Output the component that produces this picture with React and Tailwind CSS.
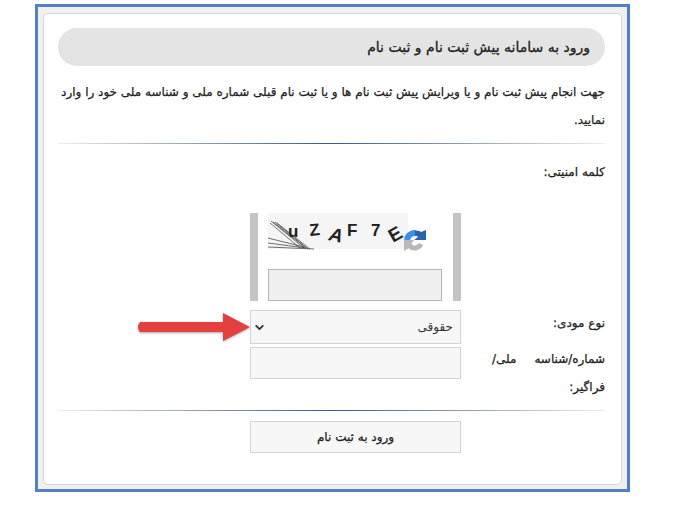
import { ChevronDown } from 'lucide-react';

const labelText = "text-[12px] text-[#222] [-webkit-text-stroke:0.25px]";
const field = "h-[32px] border border-[#d4d4d4] bg-[#f7f7f7]";

// Captcha picture: noisy strip with distorted letters and the reload icon on top
function CaptchaImage() {
  return (
    <svg viewBox="0 0 160 40" className="ml-[10px] block h-[40px] w-[160px]">
      <rect width="140" height="36" fill="#f5f5f5" />
      <g stroke="#333" strokeWidth="0.7" fill="none">
        <path d="M3 8 L36 35" />
        <path d="M5 9 L38 35" />
        <path d="M7 9 L40 36" />
        <path d="M9 10 L42 36" />
        <path d="M2 10 L32 35" />
        <path d="M0 25 L36 34" />
        <path d="M0 30 L38 35" />
        <path d="M0 34 L46 36" />
      </g>
      <g fontFamily="'Liberation Sans', sans-serif" fontWeight="700" fontSize="17" fill="#222">
        <text x="20" y="24">u</text>
        <text x="42" y="23" transform="rotate(-6 42 23)">Z</text>
        <text x="60" y="27" fontSize="19" fontStyle="italic" transform="rotate(12 60 27)">A</text>
        <text x="79" y="23">F</text>
        <text x="103" y="23">7</text>
        <text x="125" y="30" fontSize="19" transform="rotate(-30 125 30)">E</text>
      </g>
      <g transform="translate(134 15)">
        <path d="M5 12a8 8 0 0 1 9-7" fill="none" stroke="#3f8cf0" strokeWidth="6" />
        <path d="M13 3q4-1 6 1l5-2v10H12l4-3q-2-2-3-1z" fill="#2b62b0" />
        <path d="M19 16a7 7 0 0 1-12 1" fill="none" stroke="#b8b8b8" strokeWidth="5" />
        <path d="M2 12h10l-3 4 1 2-8 5z" fill="#b8b8b8" />
      </g>
    </svg>
  );
}

function Captcha() {
  return (
    <div className="flex h-[88px] flex-col justify-between border-x-[8px] border-[#c4c4c4]" dir="ltr">
      <CaptchaImage />
      <div className="ml-[10px] h-[32px] w-[174px] border border-[#b5b5b5] bg-[#f0f0f0]" />
    </div>
  );
}

function Divider() {
  return <div className="h-px bg-gradient-to-r from-[#eeeeee] via-[#3d5a80] to-[#eeeeee]" />;
}

function Arrow() {
  return (
    <svg viewBox="0 0 114 30" className="absolute left-[93px] top-[298px] h-[30px] w-[114px] drop-shadow-[0_1px_1px_rgba(0,0,0,0.35)]">
      <path d="M3 10 H86 V1 L113 15 L86 29 V20 H3 Q-1 15 3 10z" fill="#e4403f" />
    </svg>
  );
}

export default function App() {
  return (
    <div className="min-h-[510px] bg-white pl-[35px] pt-[4px] font-['DejaVu_Sans',sans-serif] text-[#333]">
      <div className="h-[488px] w-[595px] border-[3px] border-[#4f81c4] bg-[#f0f0f0] pb-[4px] pl-[5px] pr-[5px] pt-[6px]">
        <div dir="rtl" className="relative h-[472px] rounded-[5px] border border-[#d6d6d6] bg-white pl-[14px] pr-[16px] pt-[14px]">
          <h1 className="flex h-[38px] items-center rounded-[19px] bg-[#e4e4e4] pr-[15px] text-[14px] font-normal text-[#222] [-webkit-text-stroke:0.3px]">
            ورود به سامانه پیش ثبت نام و ثبت نام
          </h1>
          <p className="mt-[12px] text-[12px] leading-[28px] text-[#222] [-webkit-text-stroke:0.25px]">
            جهت انجام پیش ثبت نام و یا ویرایش پیش ثبت نام ها و یا ثبت نام قبلی شماره ملی و شناسه ملی خود را وارد نمایید.
          </p>
          <div className="mt-[9px]"><Divider /></div>

          <div className="mt-[19px] grid grid-cols-[144px_211px]">
            <div className={`col-span-2 ${labelText}`}>کلمه امنیتی:</div>
            <div className="col-start-2 mt-[32px]"><Captcha /></div>

            <div className={`mt-[13px] ${labelText}`}>نوع مودی:</div>
            <div className={`mt-[9px] flex !h-[34px] items-center justify-between pl-[2px] pr-[7px] text-[12px] ${field}`}>
              <span>حقوقی</span>
              <ChevronDown className="h-[13px] w-[13px]" strokeWidth={3.5} />
            </div>

            <div className={`mt-[1px] leading-[28px] ${labelText}`}>
              <div className="flex justify-between pl-[31px]"><span>شماره/شناسه</span><span>ملی/</span></div>
              <div>فراگیر:</div>
            </div>
            <div className={`mt-[3px] ${field}`} />
          </div>

          <div className="mt-[9px]"><Divider /></div>

          <div className="mt-[10px] grid grid-cols-[144px_211px]">
            <div className={`col-start-2 flex items-center justify-center ${field} ${labelText}`}>
              ورود به ثبت نام
            </div>
          </div>
          <Arrow />
        </div>
      </div>
    </div>
  );
}
